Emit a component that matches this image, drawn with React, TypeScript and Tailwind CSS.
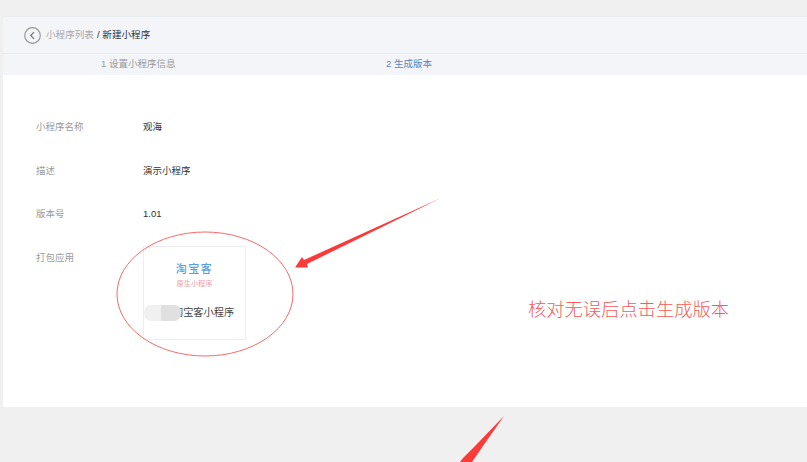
const fontStack = `font-['Liberation_Sans','Noto_Sans_CJK_SC',sans-serif]`;

const rows = [
  { label: "小程序名称", value: "观海" },
  { label: "描述", value: "演示小程序" },
  { label: "版本号", value: "1.01" },
];

const Annotations = () => (
  <>
    <svg className="absolute left-0 top-0" width="807" height="462" viewBox="0 0 807 462" fill="none">
      <ellipse cx="205" cy="294" rx="88" ry="62" stroke="#f86a6a" strokeWidth="1" />
      <path d="M441 198 L304 260 L302 257 L295 267.5 L308 267.5 L307 264 Z" fill="#fb3a3a" />
      <path d="M504 416 L476 445 L463 458 L460 462 L472 462 L483 446 Z" fill="#fb3a3a" />
    </svg>
    <div className="absolute left-[528px] top-[297px] text-[18.3px] leading-[25px] text-[#f65a5a] font-light whitespace-nowrap">
      核对无误后点击生成版本
    </div>
  </>
);

export default function App() {
  return (
    <div className={`relative h-[462px] w-[807px] overflow-hidden bg-[#f0f0f0] pl-[3px] pt-[16px] ${fontStack}`}>
      <div className="flex h-[38px] items-center border-t border-b border-[#e9ecf1] bg-[#f3f5f9] pl-[21px] text-[9.6px]">
        <svg width="17" height="17" viewBox="0 0 17 17" fill="none" stroke="#999999">
          <circle cx="8.5" cy="8.5" r="7.8" strokeWidth="1.2" />
          <path d="M10 5.2 L6.8 8.5 L10 11.8" stroke="#777777" strokeWidth="1.2" />
        </svg>
        <span className="ml-[5px] text-[#a9a9a9]">小程序列表</span>
        <span className="ml-[3px] text-[#333333]">/ 新建小程序</span>
      </div>
      <div className="flex h-[21px] items-center bg-[#f3f5f9] text-[9.5px]">
        <span className="ml-[98px] w-[285px] text-[#9a9a9a]">1 设置小程序信息</span>
        <span className="text-[#5b86b8]">2 生成版本</span>
      </div>
      <div className="h-[332px] bg-white pl-[33px] pt-[30.5px] text-[9.5px]">
        {rows.map((row) => (
          <div key={row.label} className="flex h-[43.5px] items-center">
            <span className="w-[107px] text-[#9b9b9b]">{row.label}</span>
            <span className="text-[#333333]">{row.value}</span>
          </div>
        ))}
        <div className="flex">
          <span className="mt-[14.5px] w-[107px] text-[#9b9b9b] leading-[13px]">打包应用</span>
          <div className="mt-[9.5px] flex h-[94px] w-[103px] flex-col items-center border border-[#eeeeee] pt-[14px]">
            <span className="text-[11px] font-medium leading-[16px] tracking-[1.5px] text-[#5a9fdc]">淘宝客</span>
            <span className="mt-[1px] text-[7.2px] leading-[12px] text-[#f0a0a8]">原生小程序</span>
            <div className="mt-[15px] flex h-[16px] w-full items-center">
              <div className="relative z-10 flex h-[16px] w-[37px] overflow-hidden rounded-[7px]">
                <div className="w-[17px] bg-[#f0f0f0]" />
                <div className="w-[20px] bg-[#e0e0e0]" />
              </div>
              <span className="ml-[-8px] text-[10.2px] text-[#444444] whitespace-nowrap">淘宝客小程序</span>
            </div>
          </div>
        </div>
      </div>
      <Annotations />
    </div>
  );
}
